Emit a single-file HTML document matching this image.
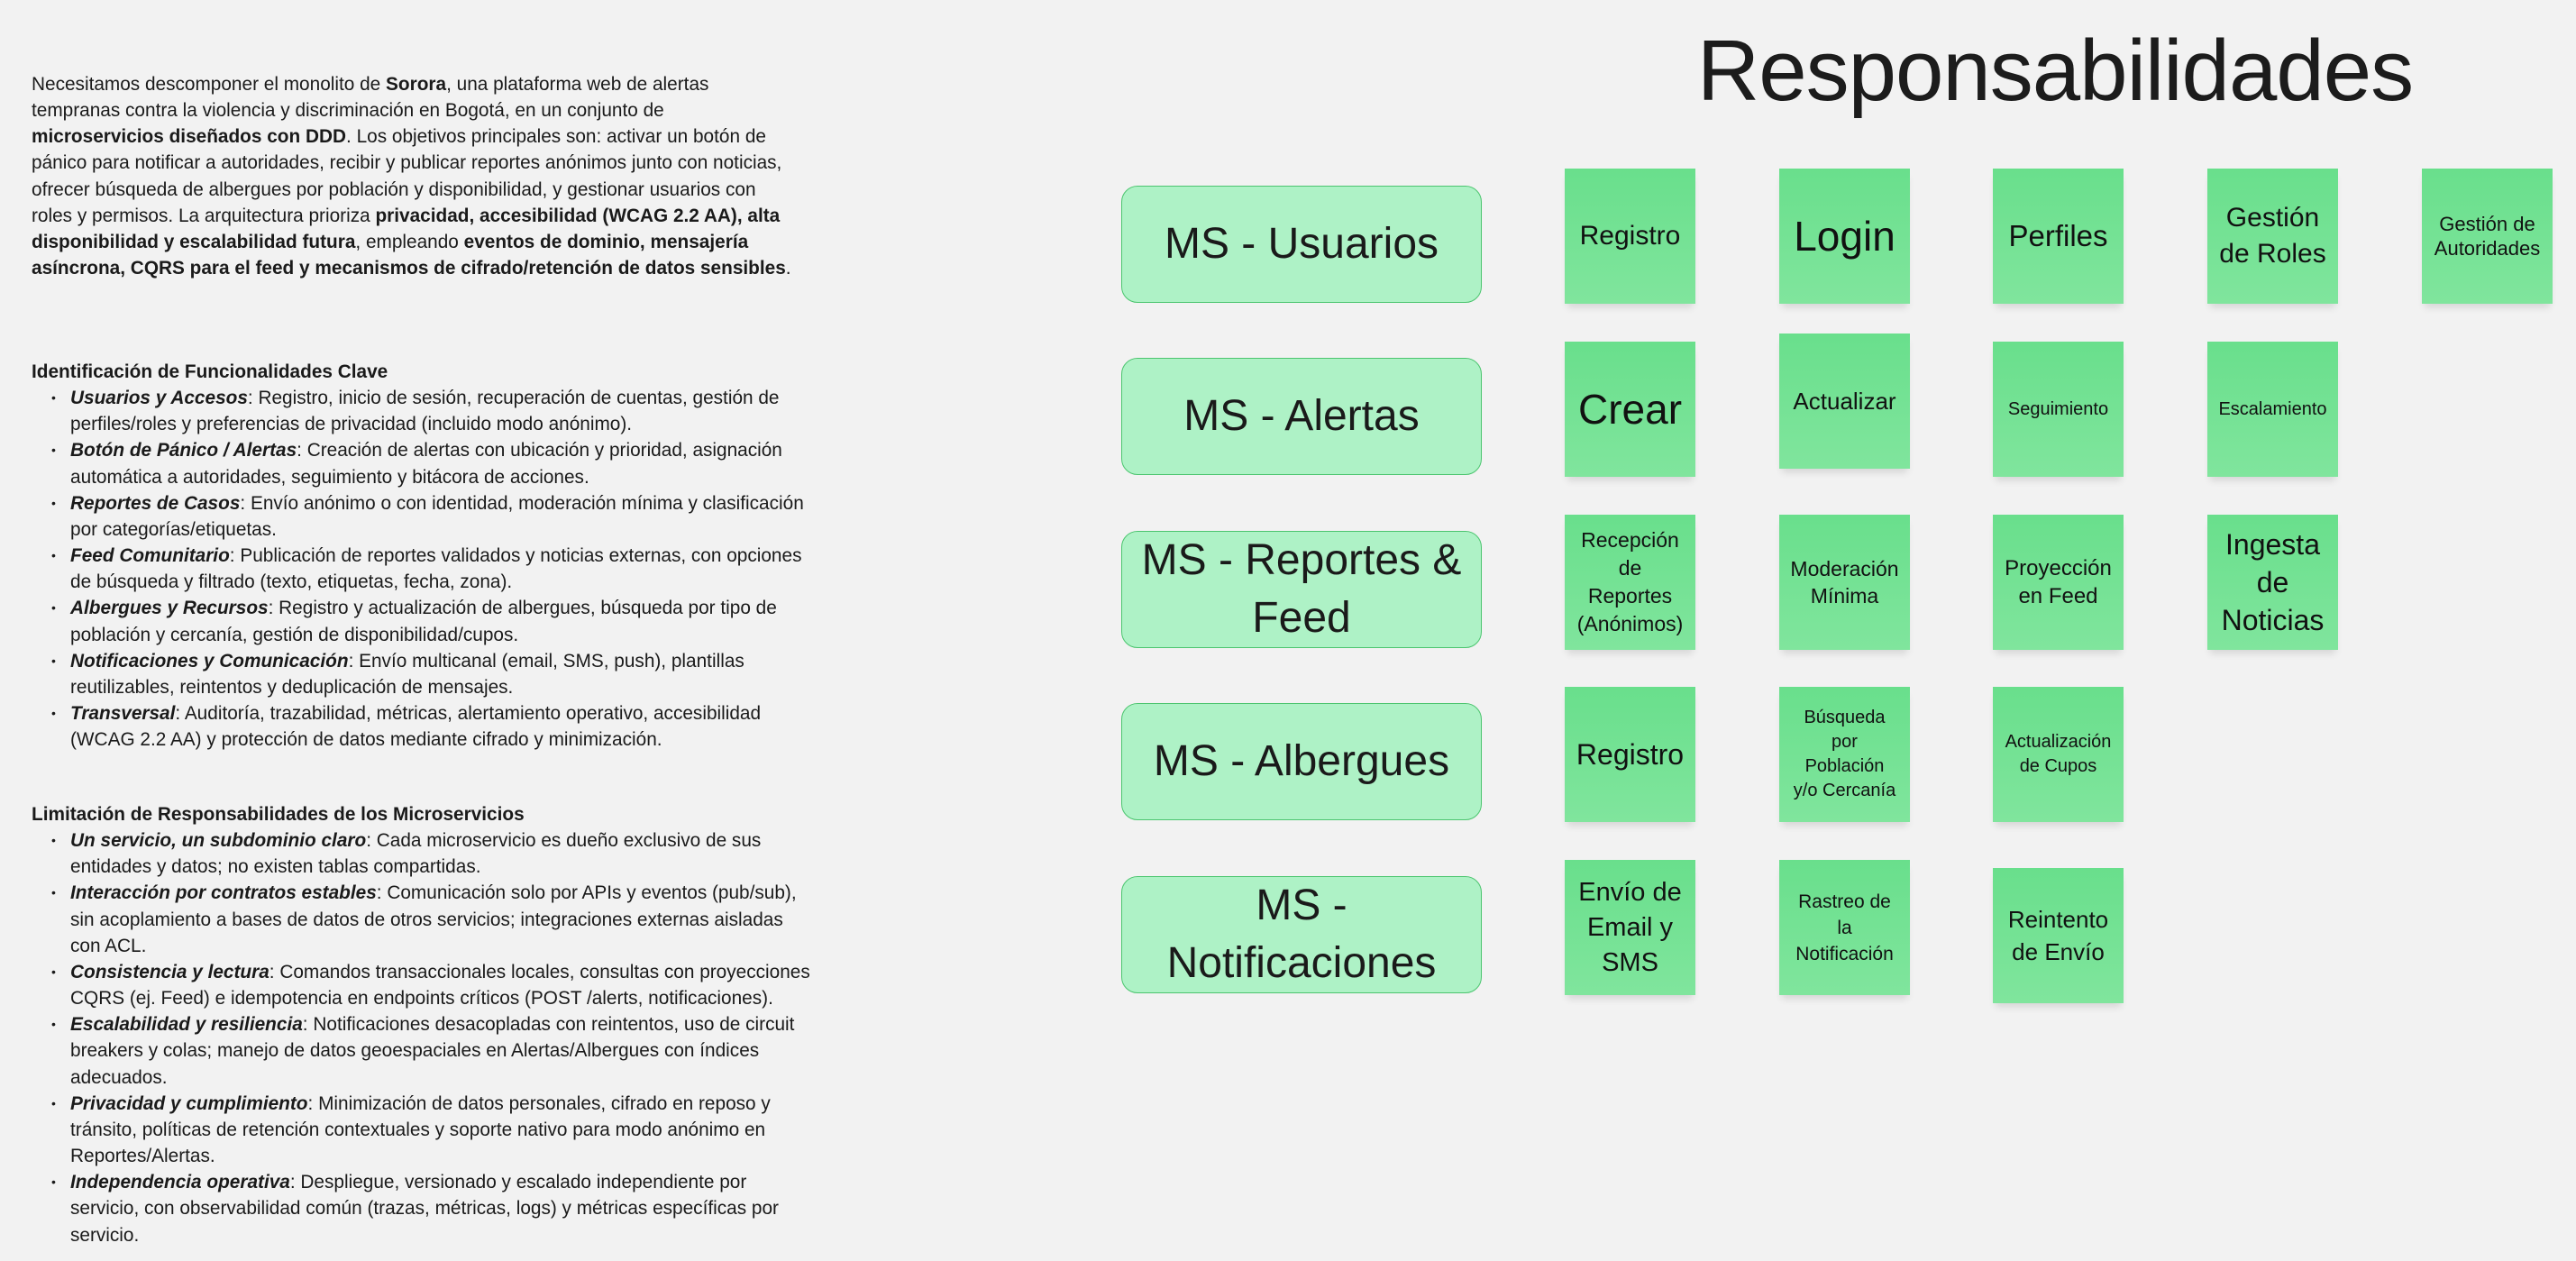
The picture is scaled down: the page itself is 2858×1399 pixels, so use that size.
<!DOCTYPE html>
<html><head><meta charset="utf-8"><style>
html,body{margin:0;padding:0}
body{width:2858px;height:1399px;background:#f2f2f2;position:relative;overflow:hidden;font-family:"Liberation Sans",sans-serif;color:#1a1a1a}
.txt{position:absolute;left:35px;font-size:20.8px;line-height:29.15px;white-space:nowrap}
.ul{margin:0;padding:0;list-style:none}
.ul li{position:relative;padding-left:43px}
.ul li:before{content:"•";position:absolute;left:22px;font-size:14px}
h1{position:absolute;left:1840px;width:880px;top:24px;margin:0;font-weight:normal;font-size:96px;line-height:110px;text-align:center;color:#1c1c1c;letter-spacing:-1px}
.ms{position:absolute;left:1244px;width:400px;height:130px;background:#aef2c6;border:1.5px solid #4cc56f;border-radius:18px;display:flex;align-items:center;justify-content:center;text-align:center;font-size:48px;line-height:64px;box-sizing:border-box}
.st{position:absolute;width:145px;height:150px;background:linear-gradient(#69df8c,#80e59d);box-shadow:0 7px 8px -3px rgba(0,0,0,0.12);display:flex;align-items:center;justify-content:center;text-align:center;box-sizing:border-box;padding:0 6px;color:#111}
</style></head><body>

<div class="txt" style="top:79px">Necesitamos descomponer el monolito de <b>Sorora</b>, una plataforma web de alertas<br>tempranas contra la violencia y discriminación en Bogotá, en un conjunto de<br><b>microservicios diseñados con DDD</b>. Los objetivos principales son: activar un botón de<br>pánico para notificar a autoridades, recibir y publicar reportes anónimos junto con noticias,<br>ofrecer búsqueda de albergues por población y disponibilidad, y gestionar usuarios con<br>roles y permisos. La arquitectura prioriza <b>privacidad, accesibilidad (WCAG 2.2 AA), alta<br>disponibilidad y escalabilidad futura</b>, empleando <b>eventos de dominio, mensajería<br>asíncrona, CQRS para el feed y mecanismos de cifrado/retención de datos sensibles</b>.</div>

<div class="txt" style="top:398px"><b>Identificación de Funcionalidades Clave</b>
<ul class="ul">
<li><b><i>Usuarios y Accesos</i></b>: Registro, inicio de sesión, recuperación de cuentas, gestión de<br>perfiles/roles y preferencias de privacidad (incluido modo anónimo).</li>
<li><b><i>Botón de Pánico / Alertas</i></b>: Creación de alertas con ubicación y prioridad, asignación<br>automática a autoridades, seguimiento y bitácora de acciones.</li>
<li><b><i>Reportes de Casos</i></b>: Envío anónimo o con identidad, moderación mínima y clasificación<br>por categorías/etiquetas.</li>
<li><b><i>Feed Comunitario</i></b>: Publicación de reportes validados y noticias externas, con opciones<br>de búsqueda y filtrado (texto, etiquetas, fecha, zona).</li>
<li><b><i>Albergues y Recursos</i></b>: Registro y actualización de albergues, búsqueda por tipo de<br>población y cercanía, gestión de disponibilidad/cupos.</li>
<li><b><i>Notificaciones y Comunicación</i></b>: Envío multicanal (email, SMS, push), plantillas<br>reutilizables, reintentos y deduplicación de mensajes.</li>
<li><b><i>Transversal</i></b>: Auditoría, trazabilidad, métricas, alertamiento operativo, accesibilidad<br>(WCAG 2.2 AA) y protección de datos mediante cifrado y minimización.</li>
</ul></div>

<div class="txt" style="top:889px"><b>Limitación de Responsabilidades de los Microservicios</b>
<ul class="ul">
<li><b><i>Un servicio, un subdominio claro</i></b>: Cada microservicio es dueño exclusivo de sus<br>entidades y datos; no existen tablas compartidas.</li>
<li><b><i>Interacción por contratos estables</i></b>: Comunicación solo por APIs y eventos (pub/sub),<br>sin acoplamiento a bases de datos de otros servicios; integraciones externas aisladas<br>con ACL.</li>
<li><b><i>Consistencia y lectura</i></b>: Comandos transaccionales locales, consultas con proyecciones<br>CQRS (ej. Feed) e idempotencia en endpoints críticos (POST /alerts, notificaciones).</li>
<li><b><i>Escalabilidad y resiliencia</i></b>: Notificaciones desacopladas con reintentos, uso de circuit<br>breakers y colas; manejo de datos geoespaciales en Alertas/Albergues con índices<br>adecuados.</li>
<li><b><i>Privacidad y cumplimiento</i></b>: Minimización de datos personales, cifrado en reposo y<br>tránsito, políticas de retención contextuales y soporte nativo para modo anónimo en<br>Reportes/Alertas.</li>
<li><b><i>Independencia operativa</i></b>: Despliegue, versionado y escalado independiente por<br>servicio, con observabilidad común (trazas, métricas, logs) y métricas específicas por<br>servicio.</li>
</ul></div>

<h1>Responsabilidades</h1>

<div class="ms" style="top:206px">MS - Usuarios</div>
<div class="ms" style="top:397px">MS - Alertas</div>
<div class="ms" style="top:589px">MS - Reportes &amp;<br>Feed</div>
<div class="ms" style="top:780px">MS - Albergues</div>
<div class="ms" style="top:972px">MS -<br>Notificaciones</div>

<div class="st" style="left:1736px;top:187px;font-size:30px">Registro</div>
<div class="st" style="left:1974px;top:187px;font-size:46px">Login</div>
<div class="st" style="left:2211px;top:187px;font-size:33px">Perfiles</div>
<div class="st" style="left:2449px;top:187px;font-size:30px;line-height:40px">Gestión<br>de Roles</div>
<div class="st" style="left:2687px;top:187px;font-size:22px;line-height:27px">Gestión de<br>Autoridades</div>

<div class="st" style="left:1736px;top:379px;font-size:46px">Crear</div>
<div class="st" style="left:1974px;top:370px;font-size:26px">Actualizar</div>
<div class="st" style="left:2211px;top:379px;font-size:20px">Seguimiento</div>
<div class="st" style="left:2449px;top:379px;font-size:20px">Escalamiento</div>

<div class="st" style="left:1736px;top:571px;font-size:23px;line-height:31px">Recepción<br>de<br>Reportes<br>(Anónimos)</div>
<div class="st" style="left:1974px;top:571px;font-size:23px;line-height:30px">Moderación<br>Mínima</div>
<div class="st" style="left:2211px;top:571px;font-size:24px;line-height:31px">Proyección<br>en Feed</div>
<div class="st" style="left:2449px;top:571px;font-size:32px;line-height:42px">Ingesta<br>de<br>Noticias</div>

<div class="st" style="left:1736px;top:762px;font-size:32px">Registro</div>
<div class="st" style="left:1974px;top:762px;font-size:20px;line-height:27px">Búsqueda<br>por<br>Población<br>y/o Cercanía</div>
<div class="st" style="left:2211px;top:762px;font-size:20px;line-height:27px">Actualización<br>de Cupos</div>

<div class="st" style="left:1736px;top:954px;font-size:29px;line-height:39px">Envío de<br>Email y<br>SMS</div>
<div class="st" style="left:1974px;top:954px;font-size:21px;line-height:29px">Rastreo de<br>la<br>Notificación</div>
<div class="st" style="left:2211px;top:963px;font-size:26px;line-height:36px">Reintento<br>de Envío</div>

</body></html>
